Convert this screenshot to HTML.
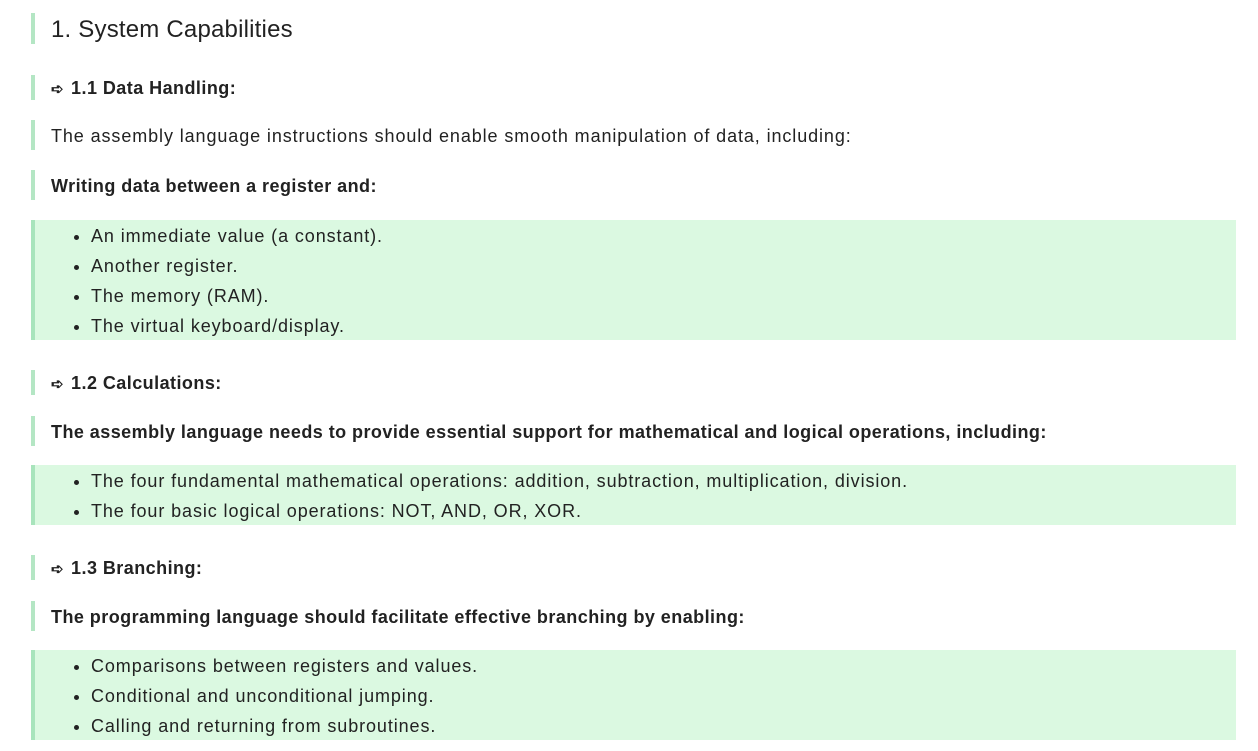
<!DOCTYPE html>
<html><head><style>
body{margin:0;width:1258px;height:751px;background:#fff;font-family:"Liberation Sans",sans-serif;color:#222;position:relative;overflow:hidden}
.b{position:absolute;left:31px;border-left:4px solid #b4e6c4;padding-left:16px;box-sizing:border-box;display:flex;align-items:center}
.h1{font-size:24px;letter-spacing:0.2px;padding-top:2px}
.h3{font-size:18px;font-weight:bold;letter-spacing:0.45px;padding-top:2px}
.p{font-size:18px;letter-spacing:0.9px;padding-top:2px}
.l{position:absolute;left:31px;right:22px;background:#dbf9e1;border-left:4px solid #a8e4bc;box-sizing:border-box;margin:0;padding:0 0 0 56px;font-size:18px;letter-spacing:0.9px;list-style:disc}
.l li{height:30px;line-height:32px}
.ar{font-size:15px;margin-right:7px}
</style></head><body>
<div class="b h1" style="top:13px;height:31px">1. System Capabilities</div>
<div class="b h3" style="top:75px;height:25px"><span class="ar">➪</span>1.1 Data Handling:</div>
<div class="b p" style="top:120px;height:30px">The assembly language instructions should enable smooth manipulation of data, including:</div>
<div class="b h3" style="top:170px;height:30px">Writing data between a register and:</div>
<ul class="l" style="top:220px;height:120px;padding-top:0"><li>An immediate value (a constant).</li><li>Another register.</li><li>The memory (RAM).</li><li>The virtual keyboard/display.</li></ul>
<div class="b h3" style="top:370px;height:25px"><span class="ar">➪</span>1.2 Calculations:</div>
<div class="b h3" style="top:416px;height:30px">The assembly language needs to provide essential support for mathematical and logical operations, including:</div>
<ul class="l" style="top:465px;height:60px;padding-top:0"><li>The four fundamental mathematical operations: addition, subtraction, multiplication, division.</li><li>The four basic logical operations: NOT, AND, OR, XOR.</li></ul>
<div class="b h3" style="top:555px;height:25px"><span class="ar">➪</span>1.3 Branching:</div>
<div class="b h3" style="top:601px;height:30px">The programming language should facilitate effective branching by enabling:</div>
<ul class="l" style="top:650px;height:90px;padding-top:0"><li>Comparisons between registers and values.</li><li>Conditional and unconditional jumping.</li><li>Calling and returning from subroutines.</li></ul>
</body></html>
